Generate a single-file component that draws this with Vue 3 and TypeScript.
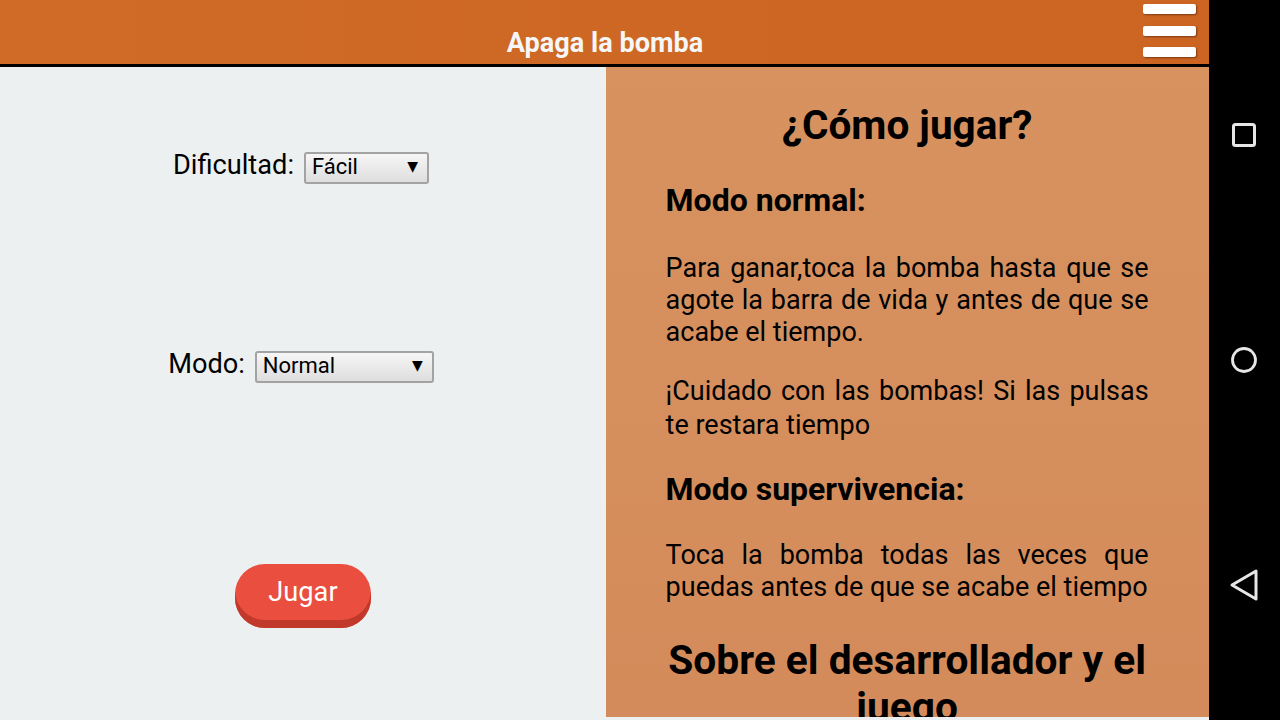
<script setup lang="ts">
const difficulties: string[] = ['Fácil', 'Media', 'Difícil']
const modes: string[] = ['Normal', 'Supervivencia']
</script>

<template>
  <div class="screen">
    <div class="app">
      <header class="topbar">
        <h1 class="title">Apaga la bomba</h1>
        <button class="menu" aria-label="Menú">
          <span class="bar"></span>
          <span class="bar"></span>
          <span class="bar"></span>
        </button>
      </header>
      <main class="content">
        <section class="setup">
          <div class="field field-difficulty">
            <label class="label" for="dif">Dificultad:</label>
            <span class="select-wrap wrap-difficulty">
              <select id="dif" class="select">
                <option v-for="d in difficulties" :key="d">{{ d }}</option>
              </select>
              <span class="arrow">▼</span>
            </span>
          </div>
          <div class="field field-mode">
            <label class="label" for="mod">Modo:</label>
            <span class="select-wrap wrap-mode">
              <select id="mod" class="select">
                <option v-for="m in modes" :key="m">{{ m }}</option>
              </select>
              <span class="arrow">▼</span>
            </span>
          </div>
          <button class="play">Jugar</button>
        </section>
        <section class="help">
          <h2 class="h-main">¿Cómo jugar?</h2>
          <h3 class="h-sub">Modo normal:</h3>
          <p class="para first">Para ganar,toca la bomba hasta que se agote la barra de vida y antes de que se acabe el tiempo.</p>
          <p class="para second">¡Cuidado con las bombas! Si las pulsas te restara tiempo</p>
          <h3 class="h-sub sub-two">Modo supervivencia:</h3>
          <p class="para third">Toca la bomba todas las veces que puedas antes de que se acabe el tiempo</p>
          <h2 class="h-main h-about">Sobre el desarrollador y el juego</h2>
        </section>
      </main>
    </div>
    <nav class="navbar">
      <svg class="nav-icon" width="30" height="30" viewBox="0 0 30 30">
        <rect x="4.5" y="4.5" width="21" height="21" rx="2" fill="none" stroke="#e6e6e6" stroke-width="3" />
      </svg>
      <svg class="nav-icon" width="30" height="30" viewBox="0 0 30 30">
        <circle cx="15" cy="15" r="11.5" fill="none" stroke="#e6e6e6" stroke-width="2.8" />
      </svg>
      <svg class="nav-icon" width="30" height="34" viewBox="0 0 30 34">
        <path d="M3 17 L27 3 L27 31 Z" fill="none" stroke="#e6e6e6" stroke-width="3" stroke-linejoin="round" />
      </svg>
    </nav>
  </div>
</template>

<style>
html, body { margin: 0; background: #ecf0f1; }
</style>

<style scoped>
.screen {
  width: 1280px;
  height: 720px;
  display: flex;
  overflow: hidden;
  font-family: Roboto, sans-serif;
  color: #000;
}
.app {
  width: 1209px;
  height: 720px;
  display: flex;
  flex-direction: column;
  background: #ecf0f1;
}
.topbar {
  height: 64px;
  border-bottom: 3px solid #000;
  background: linear-gradient(90deg, #d06a27, #cc6522);
  display: flex;
  position: relative;
  justify-content: center;
  flex: none;
}
.title {
  margin: 26px 0 0 1px;
  font-size: 27.1px;
  line-height: 34px;
  font-weight: 700;
  color: #f6f6f6;
  position: relative;
}
.menu {
  position: absolute;
  top: 4px;
  right: 13px;
  width: 53px;
  padding: 0;
  border: 0;
  background: none;
  display: flex;
  flex-direction: column;
  gap: 11.5px;
}
.bar {
  display: block;
  height: 10px;
  border-radius: 2px;
  background: #fff;
  box-shadow: 1px 1px 2px rgba(90, 40, 10, 0.7);
}
.content {
  display: flex;
  height: 650px;
  flex: none;
}
.setup {
  width: 606px;
  flex: none;
  box-sizing: border-box;
  padding-right: 4px;
  display: flex;
  flex-direction: column;
  align-items: center;
}
.field {
  display: flex;
  align-items: center;
  gap: 10px;
}
.field-difficulty { margin-top: 82px; height: 38px; }
.field-mode { margin-top: 161px; height: 38px; }
.label {
  font-size: 27.2px;
  line-height: 32px;
  position: relative;
  top: -3px;
}
.select-wrap {
  position: relative;
  display: block;
  height: 32px;
}
.wrap-difficulty { width: 125px; }
.wrap-mode { width: 179px; }
.select {
  appearance: none;
  display: block;
  width: 100%;
  height: 32px;
  box-sizing: border-box;
  padding: 0 0 4px 6px;
  border: 2px solid #a3a3a3;
  border-radius: 3px;
  background: linear-gradient(#f6f6f6, #dedede);
  color: #000;
  font-family: Roboto, sans-serif;
  font-size: 22px;
}
.arrow {
  position: absolute;
  right: 11px;
  top: 2px;
  font-size: 14px;
  line-height: 24px;
  font-family: "DejaVu Sans", sans-serif;
  pointer-events: none;
}
.play {
  margin-top: 178px;
  margin-left: 4px;
  width: 136px;
  height: 64px;
  box-sizing: border-box;
  padding: 0 0 8px;
  border: 0;
  border-radius: 30px;
  background: #e94e3e;
  box-shadow: inset 0 -8px 0 #c0392b;
  color: #fff;
  font-family: Roboto, sans-serif;
  font-size: 27.2px;
}
.help {
  width: 603px;
  height: 650px;
  flex: none;
  box-sizing: border-box;
  padding: 0 60.4px 0 59.6px;
  overflow: hidden;
  background: linear-gradient(#d7925f, #d48b5b);
}
.h-main {
  margin: 31px 0 0;
  font-size: 40.5px;
  line-height: 54px;
  font-weight: 700;
  text-align: center;
}
.h-sub {
  margin: 28px 0 0;
  font-size: 32px;
  line-height: 40px;
  font-weight: 700;
}
.para {
  margin: 0;
  font-size: 27px;
  line-height: 32px;
  text-align: justify;
}
.first { margin-top: 32px; }
.second { margin-top: 26px; line-height: 34px; }
.sub-two { margin-top: 27px; }
.third { margin-top: 30px; }
.h-about { margin-top: 34px; line-height: 47px; font-size: 40.7px; }
.navbar {
  width: 71px;
  flex: none;
  background: #000;
  display: flex;
  flex-direction: column;
  align-items: center;
  padding: 120px 2px 0 0;
  gap: 195px;
  box-sizing: border-box;
}
.nav-icon { display: block; }
.nav-icon:last-child { margin-top: -2px; }
</style>
